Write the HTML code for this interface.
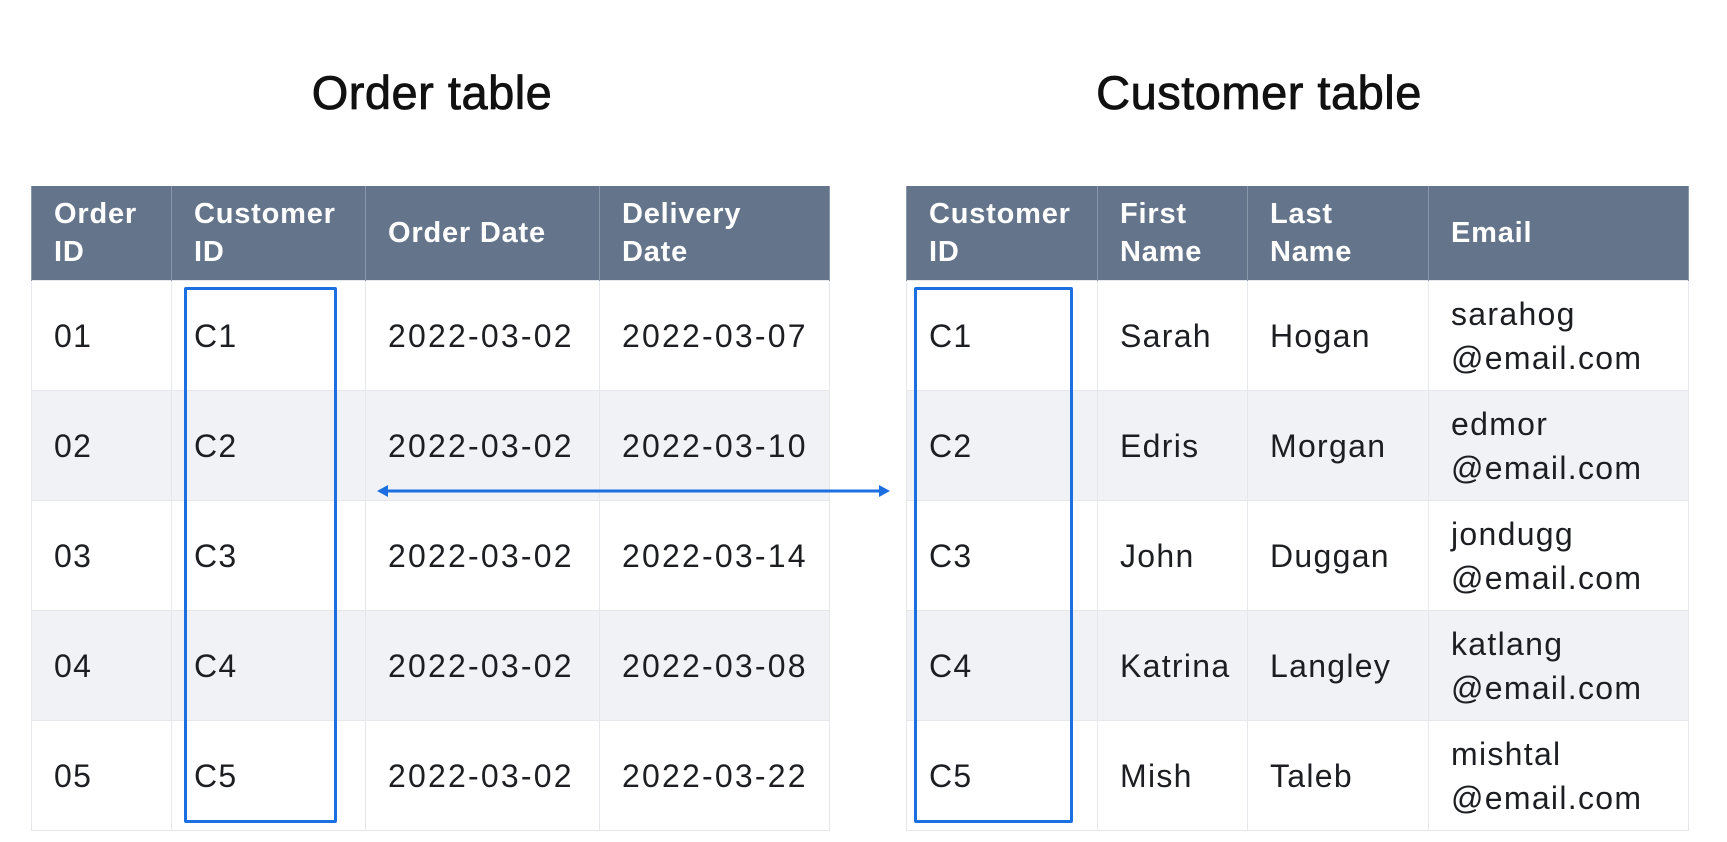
<!DOCTYPE html>
<html><head><style>
body{margin:0;width:1727px;height:842px;background:#fff;position:relative;overflow:hidden;font-family:"Liberation Sans",sans-serif;color:#1c1e21}
.t{position:absolute;top:65px;font-size:47px;letter-spacing:0.5px;transform:translateX(-50%);white-space:nowrap;color:#111;-webkit-text-stroke:0.8px #111}
table{position:absolute;top:186px;border-collapse:collapse;font-size:32px;letter-spacing:1.3px;table-layout:fixed}
th{background:#64748a;color:#fff;font-weight:bold;text-align:left;height:94px;line-height:38px;padding:0 0 0 22px;border:1px solid #8898aa;border-top:none;border-bottom:none;font-size:29px;letter-spacing:0.8px}
td{height:109px;padding:0 0 0 22px;border:1px solid #e5e7eb;line-height:44px;white-space:nowrap}
td.d{letter-spacing:2.2px}
tr:nth-child(odd) td{background:#f0f2f5}
.box{position:absolute;border:3px solid #1b6fe0;box-sizing:border-box;border-radius:2px}
</style></head><body>
<div class="t" style="left:432px">Order table</div>
<div class="t" style="left:1259px">Customer table</div>
<table style="left:31px;width:798px">
<colgroup><col style="width:140px"><col style="width:194px"><col style="width:234px"><col style="width:230px"></colgroup>
<tr><th>Order<br>ID</th><th>Customer<br>ID</th><th>Order Date</th><th>Delivery<br>Date</th></tr>
<tr><td>01</td><td>C1</td><td class="d">2022-03-02</td><td class="d">2022-03-07</td></tr>
<tr><td>02</td><td>C2</td><td class="d">2022-03-02</td><td class="d">2022-03-10</td></tr>
<tr><td>03</td><td>C3</td><td class="d">2022-03-02</td><td class="d">2022-03-14</td></tr>
<tr><td>04</td><td>C4</td><td class="d">2022-03-02</td><td class="d">2022-03-08</td></tr>
<tr><td>05</td><td>C5</td><td class="d">2022-03-02</td><td class="d">2022-03-22</td></tr>
</table>
<table style="left:906px;width:782px">
<colgroup><col style="width:191px"><col style="width:150px"><col style="width:181px"><col style="width:260px"></colgroup>
<tr><th>Customer<br>ID</th><th>First<br>Name</th><th>Last<br>Name</th><th>Email</th></tr>
<tr><td>C1</td><td>Sarah</td><td>Hogan</td><td>sarahog<br>@email.com</td></tr>
<tr><td>C2</td><td>Edris</td><td>Morgan</td><td>edmor<br>@email.com</td></tr>
<tr><td>C3</td><td>John</td><td>Duggan</td><td>jondugg<br>@email.com</td></tr>
<tr><td>C4</td><td>Katrina</td><td>Langley</td><td>katlang<br>@email.com</td></tr>
<tr><td>C5</td><td>Mish</td><td>Taleb</td><td>mishtal<br>@email.com</td></tr>
</table>
<div class="box" style="left:184px;top:287px;width:153px;height:536px"></div>
<div class="box" style="left:914px;top:287px;width:159px;height:536px"></div>
<svg style="position:absolute;left:0;top:0" width="1727" height="842">
<line x1="382" y1="491" x2="885" y2="491" stroke="#1b6fe0" stroke-width="3"/>
<polygon points="377,491 388,485 388,497" fill="#1b6fe0"/>
<polygon points="890,491 879,485 879,497" fill="#1b6fe0"/>
</svg>
</body></html>
